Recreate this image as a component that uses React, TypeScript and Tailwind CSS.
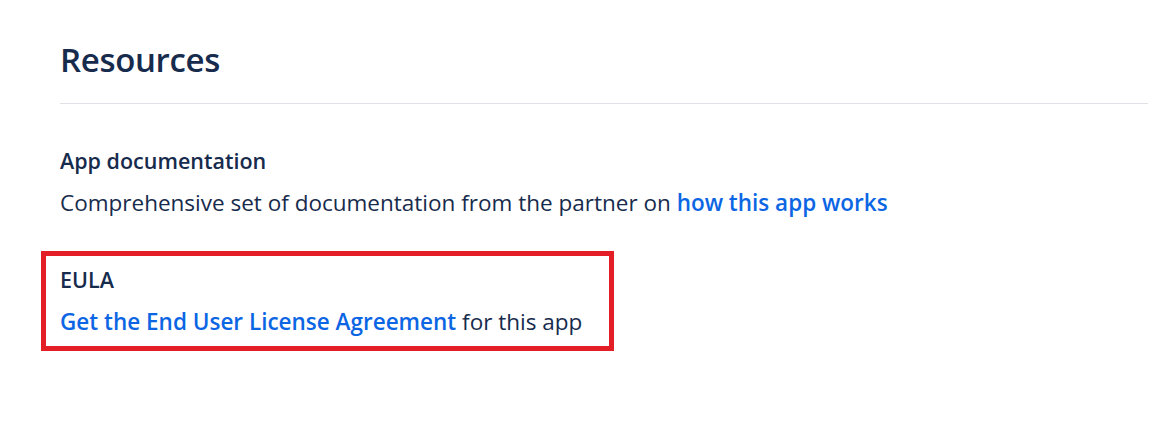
import React from "react";

export default function App() {
  return (
    <div
      className="w-[1165px] h-[441px] bg-white text-[#172b4d] pl-[60px] pr-[17px] pt-[38px]"
      style={{ fontFamily: '"Open Sans", "Noto Sans", sans-serif' }}
    >
      <h1 className="text-[33px] leading-[44px] font-semibold tracking-[-0.01em]">Resources</h1>
      <div className="mt-[21px] h-px bg-[#dfe1e6]" />
      <div className="mt-[43px]">
        <h2 className="text-[21.5px] leading-[28px] font-semibold">App documentation</h2>
        <p className="mt-[14px] text-[22.5px] leading-[28px]">
          Comprehensive set of documentation from the partner on{" "}
          <a className="text-[#0c66e4] font-semibold">how this app works</a>
        </p>
      </div>
      <div className="mt-[34px] -ml-[19px] w-[573px] h-[100px] border-[5px] border-[#e41e26] pl-[14px] pt-[10px]">
        <h2 className="text-[21.5px] leading-[28px] font-semibold">EULA</h2>
        <p className="mt-[14px] text-[22.5px] leading-[28px]">
          <a className="text-[#0c66e4] font-semibold">Get the End User License Agreement</a> for this app
        </p>
      </div>
    </div>
  );
}
